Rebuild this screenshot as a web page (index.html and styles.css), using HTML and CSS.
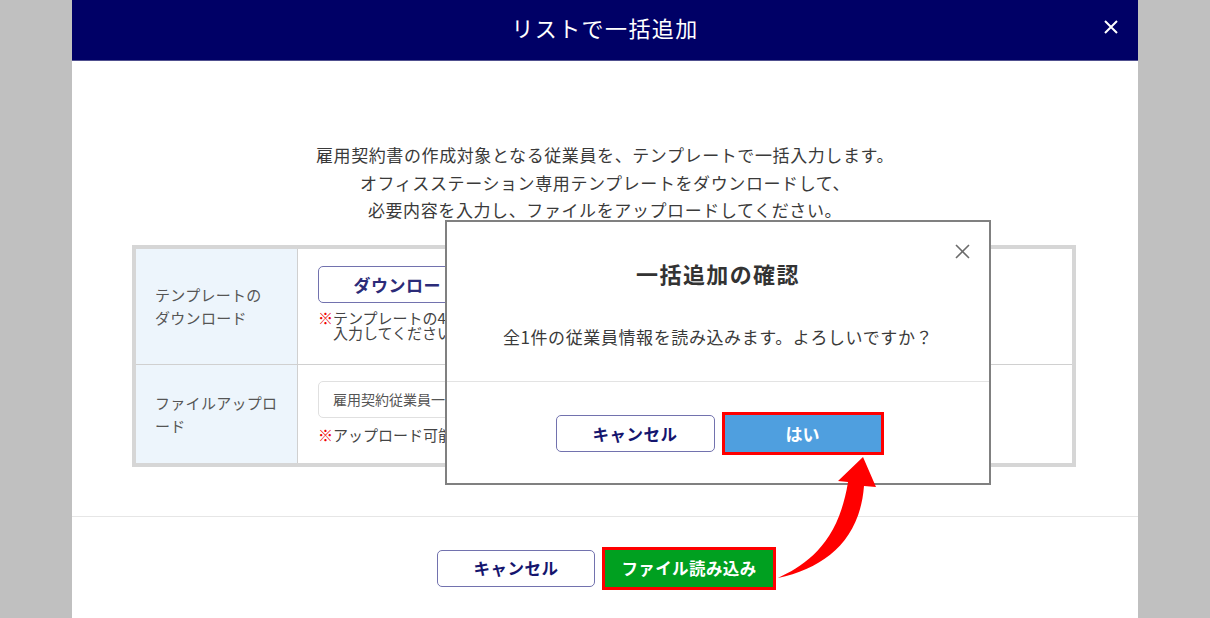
FILE: index.html
```html
<!DOCTYPE html>
<html lang="ja">
<head>
<meta charset="utf-8">
<title>リストで一括追加</title>
<link rel="stylesheet" href="styles.css">
</head>
<body>
<div class="modal">
  <header class="modal-head">
    <span></span>
    <h1 class="modal-title">リストで一括追加</h1>
    <span class="head-close">
      <svg width="14" height="14" viewBox="0 0 14 14"><path d="M1 1 L13 13 M13 1 L1 13" stroke="#fff" stroke-width="2" fill="none"/></svg>
    </span>
  </header>
  <div class="modal-body">
    <p class="intro">雇用契約書の作成対象となる従業員を、テンプレートで一括入力します。<br>オフィスステーション専用テンプレートをダウンロードして、<br>必要内容を入力し、ファイルをアップロードしてください。</p>
    <div class="form-table">
      <div class="row row-1">
        <div class="label">テンプレートの<br>ダウンロード</div>
        <div class="cell">
          <button class="btn-outline btn-download">ダウンロード</button>
          <div class="note note-1"><span class="mark">※</span><span>テンプレートの4行目から<br>入力してください。</span></div>
        </div>
      </div>
      <div class="row row-2">
        <div class="label">ファイルアップロ<br>ード</div>
        <div class="cell">
          <div class="file-input">雇用契約従業員一覧.xlsx</div>
          <div class="note note-2"><span class="mark">※</span><span>アップロード可能な形式</span></div>
        </div>
      </div>
    </div>
  </div>
  <footer class="modal-foot">
    <button class="btn-outline btn-cancel">キャンセル</button>
    <button class="btn-green">ファイル読み込み</button>
  </footer>
</div>

<div class="dialog">
  <span class="dialog-close">
    <svg width="15" height="15" viewBox="0 0 15 15"><path d="M1 1 L14 14 M14 1 L1 14" stroke="#6b6b6b" stroke-width="1.6" fill="none"/></svg>
  </span>
  <h2 class="dialog-title">一括追加の確認</h2>
  <p class="dialog-msg">全1件の従業員情報を読み込みます。よろしいですか？</p>
  <div class="dialog-foot">
    <button class="btn-outline btn-dcancel">キャンセル</button>
    <button class="btn-blue">はい</button>
  </div>
</div>

<svg class="arrow" width="1210" height="618" viewBox="0 0 1210 618">
  <path d="M778 578 C805 565 838 545 848 482 L838 481 L863 457 L876 487 L864 486 C860 540 825 568 778 578 Z" fill="#ff0000"/>
</svg>
</body>
</html>
```

FILE: styles.css
```css
* { box-sizing: border-box; }
html, body { margin: 0; padding: 0; }
body {
  background: #c0c0c0;
  font-family: "Noto Sans CJK JP", "Noto Sans", sans-serif;
  color: #333;
  height: 618px;
  overflow: hidden;
  position: relative;
}
button { font-family: inherit; cursor: pointer; }

.modal {
  width: 1066px;
  margin: 0 auto;
  background: #fff;
  min-height: 618px;
}
.modal-head {
  height: 61px;
  background: #000066;
  border-bottom: 1px solid #50508f;
  display: grid;
  grid-template-columns: 1fr auto 1fr;
  align-items: center;
}
.modal-title {
  margin: 0 0 7px;
  color: #fff;
  font-weight: 400;
  font-size: 22px;
  letter-spacing: 1.4px;
  line-height: 30px;
}
.head-close {
  justify-self: end;
  padding-right: 20px;
  display: flex;
  margin-bottom: 6px;
}

.modal-body { padding-top: 80px; }
.intro {
  margin: 0;
  text-align: center;
  font-size: 17px;
  letter-spacing: 0.6px;
  line-height: 27.5px;
  color: #3a3a3a;
}
.form-table {
  margin: 21px 62px 0 60px;
  border: 4px solid #d6d6d6;
}
.row {
  display: grid;
  grid-template-columns: 162px 1fr;
}
.row-1 { height: 116px; border-bottom: 1px solid #d0d0d0; }
.row-2 { height: 98px; }
.label {
  background: #edf5fc;
  border-right: 1px solid #d0d0d0;
  padding-left: 19px;
  display: flex;
  align-items: center;
  font-size: 15px;
  line-height: 23px;
  color: #555;
  letter-spacing: 0.3px;
}
.cell { padding: 17px 20px 0 20px; }
.row-2 .cell { padding-top: 16px; }
.btn-outline {
  background: #fff;
  border: 1px solid #7272ae;
  border-radius: 5px;
  color: #15156e;
  font-weight: 700;
  font-size: 16px;
  letter-spacing: 0.5px;
  height: 37px;
  padding: 0;
}
.btn-download { width: 176px; font-size: 17px; color: #2b2b78; }
.note {
  display: flex;
  font-size: 15px;
  color: #444;
}
.note-1 { margin-top: 7px; line-height: 15px; }
.note-2 { margin-top: 8px; line-height: 18px; }
.mark { color: #ee0000; }
.file-input {
  width: 380px;
  height: 37px;
  border: 1px solid #e0e0e0;
  border-radius: 5px;
  padding-left: 14px;
  display: flex;
  align-items: center;
  font-size: 14px;
  color: #555;
}

.modal-foot {
  margin-top: 49px;
  border-top: 1px solid #e6e6e6;
  padding-top: 33px;
  display: flex;
  justify-content: center;
  gap: 10px;
}
.btn-cancel { width: 158px; font-size: 16.5px; }
.btn-green {
  width: 168px;
  height: 37px;
  border: none;
  background: #00a020;
  color: #fff;
  font-weight: 700;
  font-size: 16.5px;
  letter-spacing: 0.4px;
  outline: 3px solid #ff0000;
  padding: 0;
}

.dialog {
  position: absolute;
  left: 445px;
  top: 220px;
  width: 546px;
  height: 265px;
  background: #fff;
  border: 2px solid #808080;
  display: flex;
  flex-direction: column;
  align-items: center;
}
.dialog-close {
  position: absolute;
  top: 22px;
  right: 19px;
  display: flex;
}
.dialog-title {
  margin: 36px 0 0;
  font-size: 22px;
  font-weight: 700;
  letter-spacing: 1.4px;
  line-height: 30px;
  color: #333;
}
.dialog-msg {
  margin: 37px 0 0;
  padding-bottom: 32px;
  font-size: 17px;
  letter-spacing: 0.6px;
  line-height: 24px;
  color: #3a3a3a;
  align-self: stretch;
  text-align: center;
  border-bottom: 1px solid #e3e3e3;
}
.dialog-foot {
  margin-top: 33px;
  display: flex;
  gap: 10px;
}
.btn-dcancel { width: 159px; font-size: 16.5px; }
.btn-blue {
  width: 156px;
  height: 37px;
  border: none;
  background: #4f9fdf;
  color: #fff;
  font-weight: 700;
  font-size: 17px;
  outline: 3px solid #ff0000;
  padding: 0;
}

.arrow {
  position: absolute;
  left: 0;
  top: 0;
  pointer-events: none;
}
```
